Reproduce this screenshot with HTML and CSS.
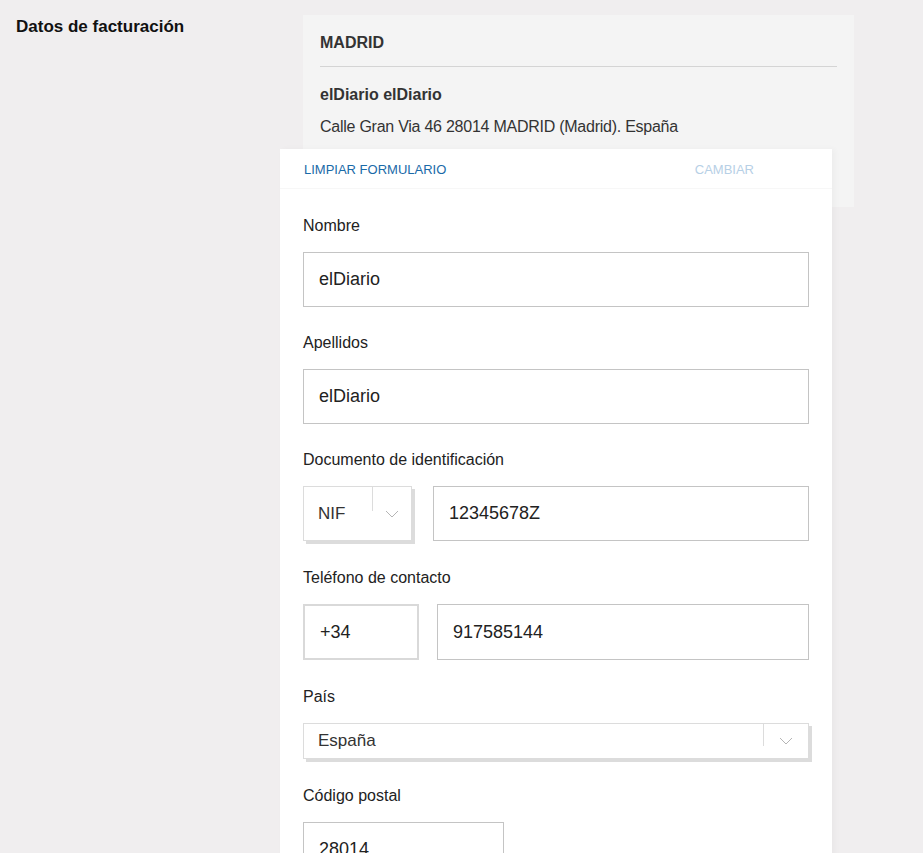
FILE: index.html
```html
<!DOCTYPE html>
<html lang="es">

<head>
  <meta charset="UTF-8">
  <meta name="viewport" content="width=device-width, initial-scale=1.0">
  <title>Datos de facturación</title>
  <link rel="stylesheet" href="styles.css">
</head>

<body>
  <main class="billing">
    <h2 class="billing-title">Datos de facturación</h2>

    <div class="billing-body">
      <div class="address-card">
        <div class="address-city">MADRID</div>
        <div class="address-name">elDiario elDiario</div>
        <div class="address-line">Calle Gran Via 46 28014 MADRID (Madrid). España</div>
      </div>

      <!-- edit form opened over the saved address -->
      <form class="edit-panel">
        <div class="panel-actions">
          <a href="#" class="link-clear">LIMPIAR FORMULARIO</a>
          <a href="#" class="link-change">CAMBIAR</a>
        </div>

        <label class="field-label">Nombre</label>
        <input class="text-input" type="text" value="elDiario">

        <label class="field-label">Apellidos</label>
        <input class="text-input" type="text" value="elDiario">

        <label class="field-label">Documento de identificación</label>
        <div class="field-row">
          <div class="select select-doc">
            <span class="select-value">NIF</span>
            <span class="select-arrow">
              <svg width="14" height="8" viewBox="0 0 14 8"><path d="M1 1l6 6 6-6" fill="none" stroke="#b5b5b5" stroke-width="1"/></svg>
            </span>
          </div>
          <input class="text-input doc-number" type="text" value="12345678Z">
        </div>

        <label class="field-label">Teléfono de contacto</label>
        <div class="field-row phone-row">
          <input class="text-input prefix-input" type="text" value="+34">
          <input class="text-input phone-number" type="text" value="917585144">
        </div>

        <label class="field-label">País</label>
        <div class="select select-country">
          <span class="select-value">España</span>
          <span class="select-arrow">
            <svg width="14" height="8" viewBox="0 0 14 8"><path d="M1 1l6 6 6-6" fill="none" stroke="#b5b5b5" stroke-width="1"/></svg>
          </span>
        </div>

        <label class="field-label">Código postal</label>
        <input class="text-input postal-input" type="text" value="28014">
      </form>
    </div>
  </main>
</body>

</html>
```

FILE: styles.css
```css
body {
  font-family: "Liberation Sans", Arial, sans-serif;
  background-color: #f0eeef;
  color: #222;
  margin: 0;
  padding: 0;
  overflow: hidden;
}

.billing {
  display: flex;
  padding: 15px 0 0 16px;
}

.billing-title {
  width: 287px;
  margin: 0;
  padding-top: 2px;
  font-size: 17px;
  font-weight: bold;
  color: #111;
}

.billing-body {
  position: relative;
  width: 551px;
  height: 838px;
}

.address-card {
  background-color: #f4f4f4;
  height: 192px;
  padding: 0 17px;
  box-sizing: border-box;
  color: #333;
}

.address-city {
  font-size: 16px;
  font-weight: bold;
  padding: 19px 0 14px;
  border-bottom: 1px solid #d4d4d4;
}

.address-name {
  font-size: 16px;
  font-weight: bold;
  margin-top: 19px;
}

.address-line {
  font-size: 16px;
  letter-spacing: -0.25px;
  margin-top: 14px;
}

/* overlay form */
.edit-panel {
  position: absolute;
  left: -23px;
  top: 134px;
  width: 552px;
  height: 720px;
  background-color: #fff;
  box-shadow: 3px 0 6px rgba(0, 0, 0, 0.03);
  padding: 0 23px 0 23px;
  box-sizing: border-box;
}

.panel-actions {
  display: flex;
  justify-content: space-between;
  height: 40px;
  margin: 0 -23px;
  padding: 13px 78px 0 24px;
  box-sizing: border-box;
  border-bottom: 1px solid #f7f7f7;
  font-size: 13px;
}

.panel-actions a {
  text-decoration: none;
}

.link-clear {
  color: #1a6aa8;
}

.link-change {
  color: #b7d0e6;
}

.field-label {
  display: block;
  font-size: 16px;
  line-height: 24px;
  margin: 24px 0 14px;
  color: #222;
}

.panel-actions + .field-label {
  margin-top: 25px;
}

.field-row + .field-label,
.select + .field-label {
  margin-top: 25px;
}

.text-input {
  display: block;
  width: 100%;
  height: 55px;
  box-sizing: border-box;
  border: 1px solid #c4c4c4;
  padding: 0 15px;
  font-family: inherit;
  font-size: 18px;
  color: #222;
  background: #fff;
  outline: none;
}

.field-row {
  display: flex;
  gap: 21px;
}

.phone-row {
  gap: 18px;
}

.select {
  display: flex;
  align-items: stretch;
  box-sizing: border-box;
  border: 1px solid #dcdcdc;
  box-shadow: 3px 3px 0 #dcdcdc;
  background: #fff;
  color: #333;
}

.select-value {
  flex: 1;
  display: flex;
  align-items: center;
  padding-left: 14px;
}

.select-arrow {
  position: relative;
  width: 45px;
  display: flex;
  align-items: center;
  justify-content: center;
}

.select-arrow::before {
  content: "";
  position: absolute;
  left: 0;
  top: 0;
  width: 1px;
  height: 24px;
  background: #dcdcdc;
}

.select-doc {
  width: 109px;
  height: 55px;
  font-size: 17px;
  flex-shrink: 0;
}

.select-doc .select-arrow {
  width: 39px;
}

.doc-number {
  flex: 1;
  width: auto;
}

.prefix-input {
  width: 116px;
  height: 56px;
  border: 2px solid #d9d9d9;
  flex-shrink: 0;
}

.phone-number {
  flex: 1;
  width: auto;
  height: 56px;
}

.select-country {
  height: 36px;
  font-size: 17px;
}

.select-country .select-arrow {
  width: 45px;
}

.select-country .select-arrow::before {
  height: 22px;
}

.postal-input {
  width: 201px;
}
```
